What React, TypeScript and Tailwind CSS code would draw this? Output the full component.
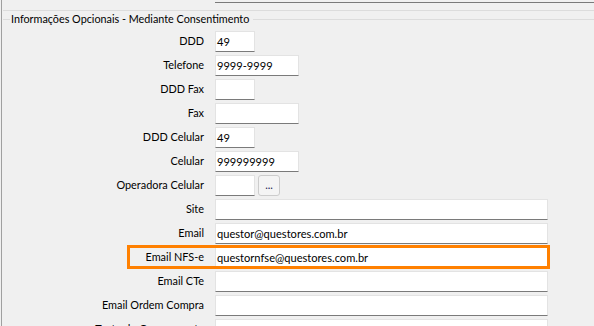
import React from "react";

type Row = { label: string; w: number; value?: string; button?: boolean; highlight?: boolean };

const rows: Row[] = [
  { label: "DDD", w: 40, value: "49" },
  { label: "Telefone", w: 84, value: "9999-9999" },
  { label: "DDD Fax", w: 40 },
  { label: "Fax", w: 84 },
  { label: "DDD Celular", w: 40, value: "49" },
  { label: "Celular", w: 84, value: "999999999" },
  { label: "Operadora Celular", w: 40, button: true },
  { label: "Site", w: 333 },
  { label: "Email", w: 333, value: "questor@questores.com.br" },
  { label: "Email NFS-e", w: 333, value: "questornfse@questores.com.br", highlight: true },
  { label: "Email CTe", w: 333 },
  { label: "Email Ordem Compra", w: 333 },
  { label: "Texto do Comprovante", w: 333 },
];

export default function App() {
  return (
    <div
      className="w-[594px] h-[326px] overflow-hidden bg-[#f0f0f0] text-black text-[10.9px] leading-none"
      style={{ fontFamily: 'Lato, "Liberation Sans", Arial, sans-serif' }}
    >
      <div className="ml-px h-full border-l border-[#a0a0a0] flex flex-col">
        {/* bottom of the field above */}
        <div className="flex h-[3px] shrink-0">
          <div className="w-[213px]" />
          <div className="flex-1 border-b border-[#7a7a7a]" />
        </div>
        <div className="h-[7px] shrink-0" />
        <div className="ml-px border-t border-[#dcdcdc] shrink-0" />
        {/* group title */}
        <div className="flex items-center h-[17px] shrink-0">
          <div className="ml-px w-[7px] border-t border-[#dcdcdc]" />
          <span className="px-px whitespace-nowrap text-[10.8px]">Informações Opcionais - Mediante Consentimento</span>
          <div className="flex-1 ml-[3px] border-t border-[#dcdcdc]" />
        </div>
        <div className="flex flex-col pt-[3px] shrink-0">
          {rows.map((r) => (
            <div key={r.label} className="relative flex items-start h-[24px] shrink-0">
              <div className="w-[202px] h-[21px] flex items-center justify-end whitespace-nowrap">{r.label}</div>
              <div className="w-[11px]" />
              <div
                className="h-[21px] bg-white border border-[#e3e3e3] border-b-[#7a7a7a] flex items-center pl-[1px] whitespace-nowrap text-[11.1px]"
                style={{ width: r.w }}
              >
                {r.value}
              </div>
              {r.button && (
                <div className="ml-[3px] w-[22px] h-[21px] rounded-[3px] border border-[#cccccc] bg-[#f4f4f4] flex items-center justify-center text-[#1a1a50]">
                  ...
                </div>
              )}
              {r.highlight && (
                <div className="absolute left-[125px] top-[-2px] w-[423px] h-[24px] border-[3px] border-[#ff8000]" />
              )}
            </div>
          ))}
        </div>
      </div>
    </div>
  );
}
